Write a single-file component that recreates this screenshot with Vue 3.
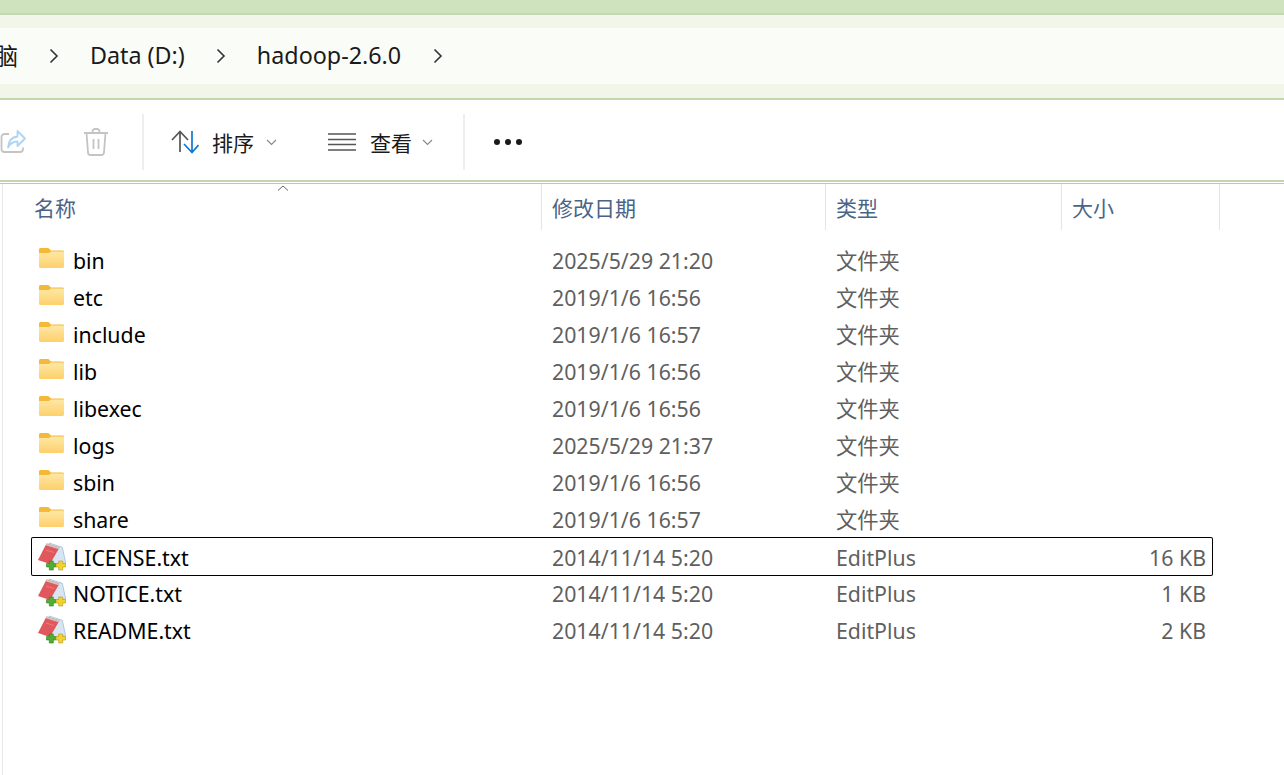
<script setup>
const folders = [
  { name: 'bin', date: '2025/5/29 21:20' },
  { name: 'etc', date: '2019/1/6 16:56' },
  { name: 'include', date: '2019/1/6 16:57' },
  { name: 'lib', date: '2019/1/6 16:56' },
  { name: 'libexec', date: '2019/1/6 16:56' },
  { name: 'logs', date: '2025/5/29 21:37' },
  { name: 'sbin', date: '2019/1/6 16:56' },
  { name: 'share', date: '2019/1/6 16:57' },
]
const files = [
  { name: 'LICENSE.txt', size: '16 KB', focus: true },
  { name: 'NOTICE.txt', size: '1 KB' },
  { name: 'README.txt', size: '2 KB' },
]
</script>

<template>
  <div class="page">
    <div class="title-band"></div>
    <div class="address-band">
      <div class="address">
        <span class="clip"><span>电脑</span></span>
        <svg class="chev c1" width="10" height="16" viewBox="0 0 10 16"><path d="M1.5 1.5 8 8l-6.5 6.5" /></svg>
        <span class="crumb">Data (D:)</span>
        <svg class="chev c2" width="10" height="16" viewBox="0 0 10 16"><path d="M1.5 1.5 8 8l-6.5 6.5" /></svg>
        <span class="crumb">hadoop-2.6.0</span>
        <svg class="chev c3" width="10" height="16" viewBox="0 0 10 16"><path d="M1.5 1.5 8 8l-6.5 6.5" /></svg>
      </div>
    </div>
    <div class="toolbar">
      <svg class="ic-share" width="26" height="26" viewBox="0 0 26 26" fill="none">
        <path d="M9 5H4.500A3 3 0 0 0 1.500 8v12a3 3 0 0 0 3 3H20a3 3 0 0 0 3-3v-1.500" stroke="#c4c4c4" stroke-width="1.800" />
        <path d="M17.500 2 25 9.500 17.500 17v-4.500c-4.500 0-7.500 2-9.500 6 .5-7 4-10.500 9.500-11z" stroke="#acd4f5" stroke-width="1.800" stroke-linejoin="round" fill="#fff" />
      </svg>
      <svg class="ic-trash" width="26" height="28" viewBox="0 0 26 28" fill="none" stroke="#c4c4c4" stroke-width="1.800">
        <path d="M1 5h24M9.500 5V3.500A2.500 2.500 0 0 1 12 1h2a2.500 2.500 0 0 1 2.500 2.500V5M3.500 5l1.500 19.500A2.500 2.500 0 0 0 7.500 27h11a2.500 2.500 0 0 0 2.500-2.500L22.500 5M10.500 11v10M15.500 11v10" />
      </svg>
      <span class="divider d1"></span>
      <svg class="ic-sort" width="28" height="24" viewBox="0 0 28 24" fill="none" stroke-width="1.700">
        <path d="M1 10 9 1.500 17 10M9 2v20" stroke="#555" />
        <path d="M13 14l8 8.500L27.500 15M21 1v21" stroke="#0f78d4" />
      </svg>
      <span class="tool-label">排序</span>
      <svg class="caret first" width="11" height="7" viewBox="0 0 11 7"><path d="M1 1l4.500 4.500L10 1" /></svg>
      <svg class="ic-view" width="28" height="18" viewBox="0 0 28 18" fill="none" stroke="#555" stroke-width="1.400">
        <path d="M0 1h28M0 6.500h28M0 11.500h28M0 17h28" />
      </svg>
      <span class="tool-label">查看</span>
      <svg class="caret" width="11" height="7" viewBox="0 0 11 7"><path d="M1 1l4.500 4.500L10 1" /></svg>
      <span class="divider d2"></span>
      <span class="more"><i></i><i></i><i></i></span>
    </div>
    <div class="toolbar-rule"></div>
    <div class="content">
      <div class="header">
        <div class="head-cell name-head">名称
          <svg class="sort-mark" width="12" height="6" viewBox="0 0 12 6"><path d="M1 5.500 6 1l5 4.500" /></svg>
        </div>
        <div class="head-cell date-head">修改日期</div>
        <div class="head-cell type-head">类型</div>
        <div class="head-cell size-head">大小</div>
      </div>
      <div class="rows">
        <div v-for="f in folders" :key="f.name" class="row">
          <div class="name-cell">
            <svg class="folder" width="25" height="20" viewBox="0 0 25 20">
              <defs>
                <linearGradient id="fg" x1="0" y1="0" x2="0" y2="1">
                  <stop offset="0" stop-color="#fee8a4" />
                  <stop offset="1" stop-color="#fdd06c" />
                </linearGradient>
              </defs>
              <path d="M1.500 0h7c1 0 1.500.4 2.200 1.200L12 2.500h11.500c.8 0 1.500.7 1.500 1.500v4H0V1.500C0 .7.700 0 1.500 0z" fill="#f5b93a" />
              <path d="M0 5h10l2-1.500h11.500c.8 0 1.500.5 1.500 1.500v13.500c0 .8-.7 1.500-1.500 1.500h-22C.7 20 0 19.300 0 18.500z" fill="url(#fg)" />
            </svg>
            <span>{{ f.name }}</span>
          </div>
          <div class="muted latin">{{ f.date }}</div>
          <div class="muted">文件夹</div>
          <div></div>
        </div>
        <div v-for="f in files" :key="f.name" class="row" :class="{ focused: f.focus }">
          <div class="name-cell">
            <svg class="ep" width="28" height="30" viewBox="0 0 28 30">
              <path d="M11 1 24.300 5.300 27.700 21 14 23z" fill="#d8e6f4" stroke="#a3bad2" stroke-width=".8" />
              <path d="M8.500 1.500 21.500 5.500 12 22 0 18z" fill="#e0575c" />
              <path d="M8.500 1.500 21.500 5.500 20.500 7.200 7.600 3.200z" fill="#cfc4bd" />
              <path d="M8 8l8 2.500" stroke="#ea7f80" stroke-width="1" />
              <path d="M11.300 19h4v2.500h2.500v3.500h-2.500v3h-4v-3H8.500v-3.500h2.800z" fill="#4fae33" stroke="#2f7a1d" stroke-width=".6" />
              <path d="M20.700 19h4v2.500h2.800v3.500h-2.800v3h-4v-3h-2.700v-3.500h2.700z" fill="#f5d32f" stroke="#b1941b" stroke-width=".6" />
            </svg>
            <span>{{ f.name }}</span>
          </div>
          <div class="muted latin">2014/11/14 5:20</div>
          <div class="muted latin">EditPlus</div>
          <div class="muted latin size">{{ f.size }}</div>
        </div>
      </div>
    </div>
  </div>
</template>

<style>
html, body { margin: 0; background: #fff; }
</style>

<style scoped>
.page {
  width: 1284px;
  height: 775px;
  overflow: hidden;
  background: #fff;
  font-family: "Noto Sans", "Noto Sans CJK SC", sans-serif;
  color: #000;
  display: flex;
  flex-direction: column;
}
.title-band {
  height: 13px;
  background: #d0e3bf;
  border-bottom: 2px solid #c4d8b2;
}
.address-band {
  height: 56px;
  padding: 13px 0 14px;
  background: #f0f6ea;
  border-bottom: 2px solid #c4d6b0;
}
.address {
  height: 56px;
  background: #fafdf7;
  display: flex;
  align-items: center;
  font-size: 23.3px;
  color: #1a1a1a;
  padding-bottom: 2px;
  box-sizing: border-box;
}
.clip {
  width: 18px;
  display: flex;
  justify-content: flex-end;
  overflow: hidden;
  white-space: nowrap;
}
.chev { fill: none; stroke: #333; stroke-width: 1.600; flex: none; margin-top: 2px; }
.c1 { margin-left: 31px; margin-right: 31px; }
.c2 { margin-left: 31px; margin-right: 31px; }
.c3 { margin-left: 32px; }
.crumb { white-space: nowrap; }
.toolbar {
  height: 80px;
  padding-top: 4px;
  box-sizing: border-box;
  display: flex;
  align-items: center;
}
.ic-share { flex: none; }
.ic-trash { margin-left: 57px; flex: none; }
.divider { width: 2px; height: 56px; background: #eeeeee; flex: none; }
.d1 { margin: 0 27px 0 33px; }
.d2 { margin: 0 29px 0 30px; }
.ic-sort { flex: none; }
.tool-label { font-size: 21px; margin-left: 14px; color: #1a1a1a; }
.ic-sort + .tool-label { margin-left: 13px; }
.caret { fill: none; stroke: #8a8a8a; stroke-width: 1.200; margin-left: 10px; flex: none; }
.caret.first { margin-left: 12px; }
.ic-view { margin-left: 51px; flex: none; }
.more { display: flex; gap: 5px; }
.more i { width: 6px; height: 6px; border-radius: 50%; background: #1a1a1a; display: block; }
.toolbar-rule {
  height: 2px;
  background: #c4d6b0;
  margin-bottom: 1px;
}
.content {
  flex: 1;
  border-top: 1px solid #c2c2c2;
  background: linear-gradient(#e8e8e8, #e8e8e8) 2px 0 / 1px 100% no-repeat #fff;
}
.header {
  height: 46px;
  display: grid;
  grid-template-columns: 542px 284px 236px 158px;
  font-size: 21px;
  color: #4a6488;
}
.head-cell {
  display: flex;
  align-items: center;
  border-right: 1px solid #e5e5e5;
  position: relative;
}
.name-head { padding-left: 34px; }
.date-head, .type-head, .size-head { padding-left: 10px; }
.sort-mark {
  position: absolute;
  left: 277px;
  top: 1px;
  fill: none;
  stroke: #666;
  stroke-width: 1;
}
.rows { margin: 11px 0 0 31px; width: 1182px; }
.row {
  height: 37px;
  display: grid;
  grid-template-columns: 521px 284px 225px 145px;
  align-items: center;
  font-size: 21.3px;
  white-space: nowrap;
}
.focused {
  height: 39px;
  margin-bottom: -2px;
  box-shadow: inset 0 0 0 1px #000;
  border-radius: 2px;
}
.name-cell { display: flex; align-items: center; }
.name-cell span { padding-top: 2px; }
.folder { flex: none; margin: 0 9px 3px 8px; }
.ep { flex: none; margin: 0 7px 0 7px; }
.muted { color: #5f5f5f; }
.latin { padding-top: 2px; }
.size { text-align: right; }
</style>
